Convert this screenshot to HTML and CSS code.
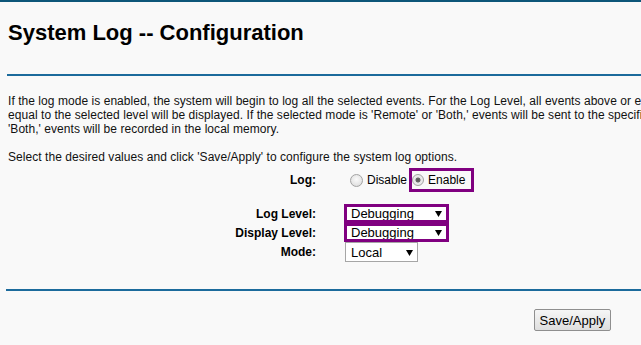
FILE: index.html
```html
<!DOCTYPE html>
<html>
<head>
<meta charset="utf-8">
<title>System Log -- Configuration</title>
<link rel="stylesheet" href="styles.css">
</head>
<body>
<div class="topbar"></div>
<div class="page">
  <h1 class="title">System Log -- Configuration</h1>
  <div class="rule"></div>
  <p class="intro">If the log mode is enabled, the system will begin to log all the selected events. For the Log Level, all events above or equal to the selected level will be logged. For the Display Level, all logged events above or<br>equal to the selected level will be displayed. If the selected mode is 'Remote' or 'Both,' events will be sent to the specified IP address and UDP port of the remote syslog server. If the selected mode is 'Local' or<br>'Both,' events will be recorded in the local memory.</p>
  <p class="hint">Select the desired values and click 'Save/Apply' to configure the system log options.</p>
  <div class="form">
    <div class="label row-log">Log:</div>
    <div class="control row-log">
      <label class="opt"><input type="radio" name="log" class="radio">Disable</label>
      <label class="opt opt-hl"><input type="radio" name="log" class="radio" checked>Enable</label>
    </div>
    <div class="label row-first">Log Level:</div>
    <div class="control row-first">
      <select class="sel sel-hl"><option>Debugging</option></select>
    </div>
    <div class="label row-sel">Display Level:</div>
    <div class="control row-sel">
      <select class="sel sel-hl"><option>Debugging</option></select>
    </div>
    <div class="label row-mode">Mode:</div>
    <div class="control row-mode">
      <select class="sel sel-mode"><option>Local</option></select>
    </div>
  </div>
  <div class="rule rule-bottom"></div>
  <div class="actions">
    <button class="btn" type="button">Save/Apply</button>
  </div>
</div>
</body>
</html>
```
FILE: styles.css
```css
html, body {
  margin: 0;
  padding: 0;
  overflow: hidden;
}
body {
  background: #f9f9f9;
  font-family: "Liberation Sans", Arial, sans-serif;
  color: #000;
  width: 641px;
  height: 345px;
}
.topbar {
  height: 2px;
  background: #0d5679;
}
.page {
  padding-left: 8px;
}
.title {
  margin: 18px 0 0;
  font-size: 22px;
  line-height: 26px;
  font-weight: bold;
  color: #000;
}
.rule {
  margin: 28px 0 0 -1px;
  width: 900px;
  height: 2px;
  background: #1c6b9c;
}
.rule-bottom {
  margin-top: 27px;
  margin-left: -2px;
}
.intro {
  margin: 18px 0 0;
  font-size: 12px;
  line-height: 14px;
  letter-spacing: 0.05px;
  white-space: nowrap;
  color: #111;
}
.hint {
  margin: 14px 0 0;
  font-size: 12px;
  line-height: 14px;
  letter-spacing: 0.05px;
  white-space: nowrap;
  color: #111;
}
.form {
  display: grid;
  grid-template-columns: 308px auto;
  column-gap: 28px;
  margin-top: 4px;
}
.label {
  text-align: right;
  font-size: 12px;
  font-weight: bold;
  display: flex;
  align-items: center;
  justify-content: flex-end;
}
.control {
  display: flex;
  align-items: center;
}
.row-log {
  height: 24px;
}
.row-first {
  margin-top: 12px;
  height: 19px;
}
.row-sel {
  height: 19px;
}
.row-mode {
  height: 20px;
}
.opt {
  display: flex;
  align-items: center;
  font-size: 12px;
  height: 24px;
  box-sizing: border-box;
}
.opt:first-child {
  margin-left: 6px;
  margin-right: 2px;
}
.opt-hl {
  border: 3px solid #800080;
  padding: 0 6px 0 0;
}
.radio {
  -webkit-appearance: none;
  appearance: none;
  width: 13px;
  height: 13px;
  margin: 0 4px 0 0;
  border: 1px solid #a3a3a3;
  border-radius: 50%;
  background: radial-gradient(circle at 50% 40%, #fafafa 0%, #e6e6e6 60%, #d2d2d2 100%);
  box-sizing: border-box;
  position: relative;
}
.opt-hl .radio {
  margin-left: 0;
  width: 12px;
  height: 12px;
  margin-right: 4px;
}
.radio:checked {
  background: radial-gradient(circle, #555 0, #6a6a6a 2.2px, #e0e0e0 2.8px, #ececec 60%, #d6d6d6 100%);
}
.sel {
  -webkit-appearance: none;
  appearance: none;
  font-family: "Liberation Sans", Arial, sans-serif;
  font-size: 13px;
  color: #000;
  background-color: #fff;
  background-image: url("data:image/svg+xml,%3Csvg xmlns='http://www.w3.org/2000/svg' width='7' height='6'%3E%3Cpath d='M0 0H7L3.5 6Z' fill='%23000'/%3E%3C/svg%3E");
  background-repeat: no-repeat;
  border-radius: 0;
  box-sizing: border-box;
  margin: 0;
  line-height: 13px;
  outline: none;
}
.sel-hl {
  width: 105px;
  height: 19px;
  border: 3px solid #800080;
  padding: 0 0 0 4px;
  background-position: 88px 4px;
}
.sel-mode {
  width: 73px;
  height: 20px;
  margin-left: 1px;
  border: 1px solid #a6a6a6;
  padding: 0 0 0 5px;
  background-position: 60px 7px;
}
.actions {
  margin-top: 18px;
  padding-left: 526px;
}
.btn {
  width: 77px;
  height: 22px;
  font-family: "Liberation Sans", Arial, sans-serif;
  font-size: 13px;
  color: #000;
  padding: 0;
  border: 1px solid #8f8f8f;
  border-radius: 2px;
  background: linear-gradient(#f6f6f6, #dedede);
}
```
